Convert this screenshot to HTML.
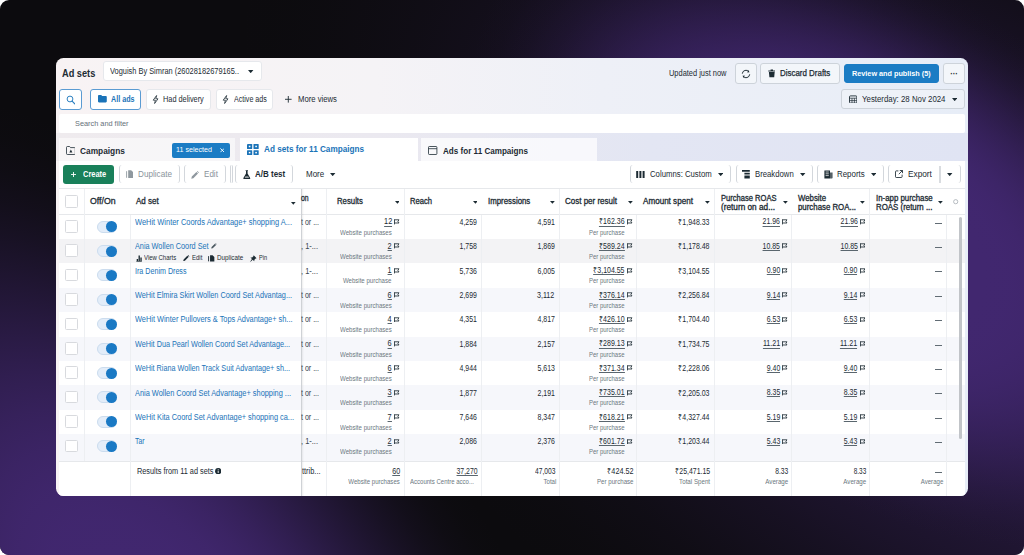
<!DOCTYPE html>
<html lang="en"><head><meta charset="utf-8"><title>Ad sets</title>
<style>
html,body{margin:0;padding:0;background:#fff;}
body{width:1024px;height:555px;overflow:hidden;font-family:"Liberation Sans", sans-serif;}
#bg{position:relative;width:1024px;height:555px;border-radius:9px;overflow:hidden;background:#0c0b0e;}
#panel{position:absolute;left:55.5px;top:58.0px;width:912.9px;height:438.3px;overflow:hidden;border-radius:7.5px;background:linear-gradient(90deg,#f8f3f4 0%,#f5f3f6 35%,#eef0f7 60%,#e7edf7 100%);}
#in{position:absolute;left:-55.5px;top:-58.0px;width:1024px;height:555px;}
.t{position:absolute;white-space:nowrap;font-family:"Liberation Sans", sans-serif;}
.r{position:absolute;box-sizing:border-box;}
</style></head><body>
<div id="bg"><div style="position:absolute;left:119.4px;top:-526.2px;width:1714px;height:1714px;transform:rotate(32.9deg);background:radial-gradient(ellipse 847px 461px at center,rgba(65,39,111,0.540) 0.0%,rgba(65,39,111,0.535) 6.2%,rgba(65,39,111,0.519) 12.5%,rgba(65,39,111,0.494) 18.8%,rgba(65,39,111,0.461) 25.0%,rgba(65,39,111,0.420) 31.2%,rgba(65,39,111,0.373) 37.5%,rgba(65,39,111,0.323) 43.8%,rgba(65,39,111,0.270) 50.0%,rgba(65,39,111,0.217) 56.2%,rgba(65,39,111,0.167) 62.5%,rgba(65,39,111,0.120) 68.8%,rgba(65,39,111,0.079) 75.0%,rgba(65,39,111,0.046) 81.2%,rgba(65,39,111,0.021) 87.5%,rgba(65,39,111,0.005) 93.8%,rgba(65,39,111,0.000) 100.0%);"></div><div style="position:absolute;left:414.5px;top:-215.0px;width:892px;height:892px;transform:rotate(33.1deg);background:radial-gradient(ellipse 436px 250px at center,rgba(65,39,111,1.000) 0.0%,rgba(65,39,111,1.000) 6.2%,rgba(65,39,111,1.000) 12.5%,rgba(65,39,111,1.000) 18.8%,rgba(65,39,111,1.000) 25.0%,rgba(65,39,111,1.000) 31.2%,rgba(65,39,111,0.993) 37.5%,rgba(65,39,111,0.947) 43.8%,rgba(65,39,111,0.862) 50.0%,rgba(65,39,111,0.745) 56.2%,rgba(65,39,111,0.606) 62.5%,rgba(65,39,111,0.458) 68.8%,rgba(65,39,111,0.314) 75.0%,rgba(65,39,111,0.186) 81.2%,rgba(65,39,111,0.086) 87.5%,rgba(65,39,111,0.022) 93.8%,rgba(65,39,111,0.000) 100.0%);"></div><div style="position:absolute;left:-500.0px;top:0.0px;width:1320px;height:1320px;transform:rotate(55deg);background:radial-gradient(ellipse 650px 350px at center,rgba(65,39,111,1.000) 0.0%,rgba(65,39,111,1.000) 6.2%,rgba(65,39,111,1.000) 12.5%,rgba(65,39,111,1.000) 18.8%,rgba(65,39,111,0.990) 25.0%,rgba(65,39,111,0.952) 31.2%,rgba(65,39,111,0.887) 37.5%,rgba(65,39,111,0.798) 43.8%,rgba(65,39,111,0.691) 50.0%,rgba(65,39,111,0.573) 56.2%,rgba(65,39,111,0.451) 62.5%,rgba(65,39,111,0.332) 68.8%,rgba(65,39,111,0.222) 75.0%,rgba(65,39,111,0.130) 81.2%,rgba(65,39,111,0.059) 87.5%,rgba(65,39,111,0.015) 93.8%,rgba(65,39,111,0.000) 100.0%);"></div><div id="panel"><div id="in">
<span id="t1" class="t" style="left:62.10px;transform-origin:0 50%;transform:scaleX(0.8738);top:66.60px;font-size:10.56px;line-height:13.2px;font-weight:700;color:#1c2b33;">Ad sets</span>
<div class="r" style="left:103.20px;top:61.30px;width:158.40px;height:19.40px;background:#fff;border:1px solid #e6e8ec;border-radius:3px;"></div>
<span id="t2" class="t" style="left:109.50px;transform-origin:0 50%;transform:scaleX(0.8884);top:66.18px;font-size:8.36px;line-height:10.45px;font-weight:400;color:#1c2b33;">Voguish By Simran (26028182679165..</span>
<svg class="r" style="left:248.20px;top:70.00px;" width="5.4" height="3.2" viewBox="0 0 5.4 3.2"><path d="M0 0H5.4 L2.7 3.2 Z" fill="#1c2b33"/></svg>
<span id="t3" class="t" style="left:669.30px;transform-origin:0 50%;transform:scaleX(0.9157);top:68.81px;font-size:8.14px;line-height:10.18px;font-weight:400;color:#1c2b33;">Updated just now</span>
<div class="r" style="left:734.80px;top:63.40px;width:22.00px;height:20.20px;background:#f3f6fa;border:1px solid #cdd3da;border-radius:3px;"></div>
<svg class="r" style="left:740.80px;top:68.60px;" width="10" height="10" viewBox="0 0 10 10"><path d="M8.7 5.3A3.7 3.7 0 0 1 2 7.2M1.3 4.7A3.7 3.7 0 0 1 8 2.8" fill="none" stroke="#1c2b33" stroke-width=".95"/><path d="M7.3 1.1L8.5 3.3 6.2 3.5ZM2.7 8.9L1.5 6.7 3.8 6.5Z" fill="#1c2b33"/></svg>
<div class="r" style="left:760.30px;top:63.40px;width:79.60px;height:20.20px;background:#f3f6fa;border:1px solid #cdd3da;border-radius:3px;"></div>
<svg class="r" style="left:767.60px;top:69.30px;" width="7.6" height="8.6" viewBox="0 0 7.6 8.6"><path d="M0.3 1.6H7.3V2.6H0.3ZM2.6 0.4H5V1.4H2.6ZM0.9 3.1H6.7L6.2 8.3H1.4Z" fill="#1c2b33"/></svg>
<span id="t4" class="t" style="left:780.20px;transform-origin:0 50%;transform:scaleX(0.9516);top:68.38px;font-size:8.36px;line-height:10.45px;font-weight:400;color:#1c2b33;-webkit-text-stroke:.25px #1c2b33;">Discard Drafts</span>
<div class="r" style="left:843.70px;top:63.90px;width:95.80px;height:18.90px;background:#1b7cc4;border:1px solid #1b7cc4;border-radius:3px;"></div>
<span id="t5" class="t" style="left:852.00px;transform-origin:0 50%;transform:scaleX(0.9585);top:69.05px;font-size:7.59px;line-height:9.49px;font-weight:700;color:#fff;">Review and publish (5)</span>
<div class="r" style="left:943.10px;top:63.40px;width:21.80px;height:20.20px;background:#f3f6fa;border:1px solid #cdd3da;border-radius:3px;"></div>
<span id="t6" class="t" style="left:954.00px;transform-origin:50% 50%;transform:translateX(-50%) scaleX(0.8800);top:68.80px;font-size:8.8px;line-height:11.0px;font-weight:700;color:#1c2b33;">···</span>
<div class="r" style="left:59.00px;top:89.30px;width:22.80px;height:20.60px;background:#fff;border:1px solid #5a9bd2;border-radius:3px;"></div>
<svg class="r" style="left:65.60px;top:95.00px;" width="9.6" height="9.6" viewBox="0 0 9.6 9.6"><circle cx="4" cy="4" r="2.9" fill="none" stroke="#2a7fc0" stroke-width="1"/><path d="M6.1 6.1L8.8 8.8" stroke="#2a7fc0" stroke-width="1.2" stroke-linecap="round"/></svg>
<div class="r" style="left:90.40px;top:89.30px;width:50.40px;height:20.60px;background:#fff;border:1px solid #5a9bd2;border-radius:3px;"></div>
<svg class="r" style="left:97.90px;top:95.40px;" width="8.8" height="7.4" viewBox="0 0 8.8 7.4"><path d="M0 1.2C0 .6.4 0 1 0H3.2L4.2 1.1H7.8C8.4 1.1 8.8 1.6 8.8 2.2V6.3C8.8 6.9 8.4 7.4 7.8 7.4H1C.4 7.4 0 6.9 0 6.3Z" fill="#1a73b8"/></svg>
<span id="t7" class="t" style="left:110.50px;transform-origin:0 50%;transform:scaleX(0.8589);top:94.08px;font-size:8.36px;line-height:10.45px;font-weight:700;color:#1a73b8;">All ads</span>
<div class="r" style="left:145.80px;top:89.30px;width:65.10px;height:20.60px;background:#fff;border:1px solid #e6e8ec;border-radius:3px;"></div>
<svg class="r" style="left:152.00px;top:94.80px;" width="7" height="9" viewBox="0 0 7 9"><path d="M4.6 .5L1.2 5.2H3.4L2.6 8.5 6 3.8H3.8Z" fill="none" stroke="#1c2b33" stroke-width=".8" stroke-linejoin="round"/></svg>
<span id="t8" class="t" style="left:163.00px;transform-origin:0 50%;transform:scaleX(0.8795);top:94.08px;font-size:8.36px;line-height:10.45px;font-weight:400;color:#1c2b33;">Had delivery</span>
<div class="r" style="left:216.00px;top:89.30px;width:57.20px;height:20.60px;background:#fff;border:1px solid #e6e8ec;border-radius:3px;"></div>
<svg class="r" style="left:222.30px;top:94.80px;" width="7" height="9" viewBox="0 0 7 9"><path d="M4.6 .5L1.2 5.2H3.4L2.6 8.5 6 3.8H3.8Z" fill="none" stroke="#1c2b33" stroke-width=".8" stroke-linejoin="round"/></svg>
<span id="t9" class="t" style="left:233.60px;transform-origin:0 50%;transform:scaleX(0.8519);top:94.08px;font-size:8.36px;line-height:10.45px;font-weight:400;color:#1c2b33;">Active ads</span>
<svg class="r" style="left:285.00px;top:96.20px;" width="6.6" height="6.6" viewBox="0 0 6.6 6.6"><path d="M3.3 0V6.6M0 3.3H6.6" stroke="#1c2b33" stroke-width=".9"/></svg>
<span id="t10" class="t" style="left:298.00px;transform-origin:0 50%;transform:scaleX(0.9217);top:94.08px;font-size:8.36px;line-height:10.45px;font-weight:400;color:#1c2b33;">More views</span>
<div class="r" style="left:841.40px;top:89.10px;width:123.80px;height:19.80px;background:#eef2f8;border:1px solid #cdd3da;border-radius:3px;"></div>
<svg class="r" style="left:848.70px;top:94.60px;" width="8.4" height="8.6" viewBox="0 0 8.4 8.6"><rect x=".5" y=".9" width="7.4" height="7.2" rx="1" fill="none" stroke="#1c2b33" stroke-width=".9"/><path d="M.5 3.2H7.9M.5 5.6H7.9M3 3.2V8M5.4 3.2V8" stroke="#1c2b33" stroke-width=".7"/></svg>
<span id="t11" class="t" style="left:861.80px;transform-origin:0 50%;transform:scaleX(0.9268);top:93.61px;font-size:8.47px;line-height:10.59px;font-weight:400;color:#1c2b33;">Yesterday: 28 Nov 2024</span>
<svg class="r" style="left:951.70px;top:97.60px;" width="5.4" height="3.2" viewBox="0 0 5.4 3.2"><path d="M0 0H5.4 L2.7 3.2 Z" fill="#1c2b33"/></svg>
<div class="r" style="left:59.00px;top:114.30px;width:906.20px;height:18.90px;background:#fff;border-radius:2px;"></div>
<span id="t12" class="t" style="left:74.70px;transform-origin:0 50%;transform:scaleX(0.9292);top:118.55px;font-size:7.92px;line-height:9.9px;font-weight:400;color:#66717a;">Search and filter</span>
<div class="r" style="left:55.00px;top:133.20px;width:915.00px;height:27.80px;background:linear-gradient(90deg,#efebee 0%,#ebe9f0 35%,#e3e6f3 65%,#e0e4f3 100%);"></div>
<div class="r" style="left:59.00px;top:137.80px;width:176.40px;height:23.20px;background:rgba(255,255,255,.55);"></div>
<div class="r" style="left:240.40px;top:137.80px;width:177.20px;height:23.20px;background:#fff;"></div>
<div class="r" style="left:421.30px;top:137.80px;width:176.10px;height:23.20px;background:rgba(255,255,255,.72);"></div>
<svg class="r" style="left:65.60px;top:146.40px;" width="9.8" height="9" viewBox="0 0 9.8 9"><path d="M.5 1.3C.5.9.8.5 1.3.5H3.6L4.5 1.6H8.5C9 1.6 9.3 2 9.3 2.4V7.7C9.3 8.1 9 8.5 8.5 8.5H1.3C.8 8.5.5 8.1.5 7.7Z" fill="none" stroke="#1c2b33" stroke-width=".8"/><path d="M4.9 3.4L6.4 6.6H3.4Z" fill="#1c2b33"/></svg>
<span id="t13" class="t" style="left:80.30px;transform-origin:0 50%;transform:scaleX(0.8913);top:145.56px;font-size:9.35px;line-height:11.69px;font-weight:700;color:#1c2b33;">Campaigns</span>
<div class="r" style="left:171.60px;top:143.30px;width:58.00px;height:14.40px;background:#1b7cc4;border-radius:2px;"></div>
<span id="t14" class="t" style="left:176.00px;transform-origin:0 50%;transform:scaleX(0.8910);top:145.38px;font-size:8.03px;line-height:10.04px;font-weight:400;color:#fff;">11 selected</span>
<svg class="r" style="left:219.60px;top:148.20px;" width="4.6" height="4.6" viewBox="0 0 4.6 4.6"><path d="M.4.4L4.2 4.2M4.2.4L.4 4.2" stroke="#fff" stroke-width=".9"/></svg>
<svg class="r" style="left:247.00px;top:143.80px;" width="11.8" height="11.2" viewBox="0 0 11.8 11.2"><g fill="#1a73b8"><rect x="0" y="0" width="5.2" height="4.9" rx=".5"/><rect x="6.5" y="0" width="5.2" height="4.9" rx=".5"/><rect x="0" y="6.2" width="5.2" height="4.9" rx=".5"/><rect x="6.5" y="6.2" width="5.2" height="4.9" rx=".5"/></g><g fill="#fff"><rect x="1.8" y="1.7" width="1.6" height="1.5"/><rect x="8.3" y="1.7" width="1.6" height="1.5"/><rect x="1.8" y="7.9" width="1.6" height="1.5"/><rect x="8.3" y="7.9" width="1.6" height="1.5"/></g></svg>
<span id="t15" class="t" style="left:263.90px;transform-origin:0 50%;transform:scaleX(0.8761);top:143.66px;font-size:9.35px;line-height:11.69px;font-weight:700;color:#1a73b8;">Ad sets for 11 Campaigns</span>
<svg class="r" style="left:428.40px;top:146.40px;" width="9.4" height="9" viewBox="0 0 9.4 9"><rect x=".5" y=".5" width="8.4" height="8" rx=".8" fill="none" stroke="#1c2b33" stroke-width=".8"/><path d="M.5 2.7H8.9" stroke="#1c2b33" stroke-width=".8"/></svg>
<span id="t16" class="t" style="left:443.00px;transform-origin:0 50%;transform:scaleX(0.8661);top:145.96px;font-size:9.35px;line-height:11.69px;font-weight:700;color:#1c2b33;">Ads for 11 Campaigns</span>
<div class="r" style="left:59.00px;top:161.00px;width:905.70px;height:28.00px;background:#fff;"></div>
<div class="r" style="left:63.10px;top:164.80px;width:50.90px;height:18.90px;background:#19805a;border-radius:3px;"></div>
<svg class="r" style="left:70.90px;top:172.20px;" width="5" height="5" viewBox="0 0 5 5"><path d="M2.5 0V5M0 2.5H5" stroke="#fff" stroke-width=".9"/></svg>
<span id="t17" class="t" style="left:82.80px;transform-origin:0 50%;transform:scaleX(0.8928);top:169.18px;font-size:8.36px;line-height:10.45px;font-weight:700;color:#fff;">Create</span>
<div class="r" style="left:118.60px;top:165.30px;width:61.40px;height:18.20px;background:transparent;border-left:1px solid #d3d7dc;border-right:1px solid #d3d7dc;border-radius:3px;"></div>
<svg class="r" style="left:125.70px;top:170.40px;" width="7.6" height="8.4" viewBox="0 0 7.6 8.4"><path d="M.6 1.2V7.8" stroke="#8f989f" stroke-width=".9"/><path d="M2.2.3H5.2L7.2 2.3V7.9H2.2Z" fill="#8f989f"/></svg>
<span id="t18" class="t" style="left:137.80px;transform-origin:0 50%;transform:scaleX(0.9771);top:169.18px;font-size:8.36px;line-height:10.45px;font-weight:400;color:#8a939b;">Duplicate</span>
<div class="r" style="left:183.70px;top:165.30px;width:42.30px;height:18.20px;background:transparent;border-left:1px solid #d3d7dc;border-right:1px solid #d3d7dc;border-radius:3px;"></div>
<svg class="r" style="left:191.00px;top:170.60px;" width="8" height="8" viewBox="0 0 8 8"><path d="M.3 7.7L.8 5.6 5.4 1 7 2.6 2.4 7.2Z M5.9.5L6.4 0 8 1.6 7.5 2.1Z" fill="#8f989f"/></svg>
<span id="t19" class="t" style="left:203.80px;transform-origin:0 50%;transform:scaleX(0.9659);top:169.18px;font-size:8.36px;line-height:10.45px;font-weight:400;color:#8a939b;">Edit</span>
<div class="r" style="left:229.50px;top:165.30px;width:3.00px;height:18.20px;background:transparent;border-left:1px solid #d3d7dc;border-right:1px solid #d3d7dc;border-radius:3px;"></div>
<div class="r" style="left:235.40px;top:165.30px;width:58.00px;height:18.20px;background:transparent;border-left:1px solid #d3d7dc;border-right:1px solid #d3d7dc;border-radius:3px;"></div>
<svg class="r" style="left:243.00px;top:169.80px;" width="7.6" height="9.4" viewBox="0 0 7.6 9.4"><path d="M2.6.3H5V1.1H4.6V3.6L7.2 8.1C7.4 8.6 7.1 9.1 6.6 9.1H1C.5 9.1.2 8.6.4 8.1L3 3.6V1.1H2.6Z" fill="#1c2b33"/><path d="M2.4 6.3H5.2L6 7.9H1.6Z" fill="#fff" opacity=".55"/></svg>
<span id="t20" class="t" style="left:254.80px;transform-origin:0 50%;transform:scaleX(0.9315);top:169.04px;font-size:8.58px;line-height:10.72px;font-weight:700;color:#1c2b33;">A/B test</span>
<span id="t21" class="t" style="left:306.00px;transform-origin:0 50%;transform:scaleX(0.9311);top:169.04px;font-size:8.58px;line-height:10.72px;font-weight:400;color:#1c2b33;">More</span>
<svg class="r" style="left:330.20px;top:173.20px;" width="5.4" height="3.2" viewBox="0 0 5.4 3.2"><path d="M0 0H5.4 L2.7 3.2 Z" fill="#1c2b33"/></svg>
<div class="r" style="left:629.70px;top:165.30px;width:100.90px;height:18.20px;background:transparent;border-left:1px solid #d3d7dc;border-right:1px solid #d3d7dc;border-radius:3px;"></div>
<svg class="r" style="left:636.00px;top:170.60px;" width="8.8" height="7.6" viewBox="0 0 8.8 7.6"><path d="M.2 0H2.2V7.6H.2ZM3.4 0H5.4V7.6H3.4ZM6.6 0H8.6V7.6H6.6Z" fill="#1c2b33"/></svg>
<span id="t22" class="t" style="left:649.90px;transform-origin:0 50%;transform:scaleX(0.9304);top:169.18px;font-size:8.36px;line-height:10.45px;font-weight:400;color:#1c2b33;">Columns: Custom</span>
<svg class="r" style="left:717.50px;top:173.20px;" width="5.4" height="3.2" viewBox="0 0 5.4 3.2"><path d="M0 0H5.4 L2.7 3.2 Z" fill="#1c2b33"/></svg>
<div class="r" style="left:735.60px;top:165.30px;width:77.30px;height:18.20px;background:transparent;border-left:1px solid #d3d7dc;border-right:1px solid #d3d7dc;border-radius:3px;"></div>
<svg class="r" style="left:742.40px;top:170.20px;" width="7.8" height="8.6" viewBox="0 0 7.8 8.6"><path d="M0 0H7.8V1.8H0ZM2.4 2.8H7.8V4.6H2.4ZM2.4 5.6H7.8V8.6H2.4Z" fill="#1c2b33"/></svg>
<span id="t23" class="t" style="left:755.00px;transform-origin:0 50%;transform:scaleX(0.9269);top:169.18px;font-size:8.36px;line-height:10.45px;font-weight:400;color:#1c2b33;">Breakdown</span>
<svg class="r" style="left:800.30px;top:173.20px;" width="5.4" height="3.2" viewBox="0 0 5.4 3.2"><path d="M0 0H5.4 L2.7 3.2 Z" fill="#1c2b33"/></svg>
<div class="r" style="left:817.20px;top:165.30px;width:66.80px;height:18.20px;background:transparent;border-left:1px solid #d3d7dc;border-right:1px solid #d3d7dc;border-radius:3px;"></div>
<svg class="r" style="left:823.50px;top:170.00px;" width="9" height="9" viewBox="0 0 9 9"><path d="M.4.4H6V8.6H.4Z" fill="#1c2b33"/><path d="M6 2.4H8.6V7.6C8.6 8.2 8.2 8.6 7.6 8.6H6Z" fill="#1c2b33" opacity=".75"/><path d="M1.6 2H4.8M1.6 3.8H4.8M1.6 5.6H4.8" stroke="#fff" stroke-width=".7"/></svg>
<span id="t24" class="t" style="left:836.90px;transform-origin:0 50%;transform:scaleX(0.9480);top:169.18px;font-size:8.36px;line-height:10.45px;font-weight:400;color:#1c2b33;">Reports</span>
<svg class="r" style="left:870.90px;top:173.20px;" width="5.4" height="3.2" viewBox="0 0 5.4 3.2"><path d="M0 0H5.4 L2.7 3.2 Z" fill="#1c2b33"/></svg>
<div class="r" style="left:887.80px;top:165.30px;width:73.20px;height:18.20px;background:transparent;border-left:1px solid #d3d7dc;border-right:1px solid #d3d7dc;border-radius:3px;"></div>
<svg class="r" style="left:894.90px;top:170.40px;" width="8" height="8" viewBox="0 0 8 8"><path d="M3.4.9H1.2C.8.9.5 1.2.5 1.6V6.8C.5 7.2.8 7.5 1.2 7.5H6.4C6.8 7.5 7.1 7.2 7.1 6.8V4.6" fill="none" stroke="#1c2b33" stroke-width=".85"/><path d="M4.8.5H7.5V3.2M7.5.5L3.8 4.2" fill="none" stroke="#1c2b33" stroke-width=".85"/></svg>
<span id="t25" class="t" style="left:907.50px;transform-origin:0 50%;transform:scaleX(0.9907);top:169.18px;font-size:8.36px;line-height:10.45px;font-weight:400;color:#1c2b33;">Export</span>
<div class="r" style="left:938.60px;top:166.00px;width:2.00px;height:17.00px;background:#d9dce0;"></div>
<svg class="r" style="left:947.30px;top:173.20px;" width="5.4" height="3.2" viewBox="0 0 5.4 3.2"><path d="M0 0H5.4 L2.7 3.2 Z" fill="#1c2b33"/></svg>
<div class="r" style="left:59.00px;top:188.80px;width:905.70px;height:309.50px;background:#fff;"></div>
<div class="r" style="left:59.00px;top:238.90px;width:905.70px;height:24.40px;background:#f3f3f5;"></div>
<div class="r" style="left:59.00px;top:287.70px;width:905.70px;height:24.40px;background:#f6f7fb;"></div>
<div class="r" style="left:59.00px;top:336.50px;width:905.70px;height:24.40px;background:#f6f7fb;"></div>
<div class="r" style="left:59.00px;top:385.30px;width:905.70px;height:24.40px;background:#f6f7fb;"></div>
<div class="r" style="left:59.00px;top:434.10px;width:905.70px;height:27.40px;background:#f6f7fb;"></div>
<div class="r" style="left:59.00px;top:188.30px;width:905.70px;height:1.00px;background:#e6e8eb;"></div>
<div class="r" style="left:59.00px;top:214.00px;width:905.70px;height:1.00px;background:#e6e8eb;"></div>
<div class="r" style="left:59.00px;top:461.00px;width:905.70px;height:1.00px;background:#e6e8eb;"></div>
<div class="r" style="left:83.50px;top:188.80px;width:1.00px;height:272.70px;background:#edeff2;"></div>
<div class="r" style="left:130.20px;top:214.50px;width:1.00px;height:281.80px;background:#edeff2;"></div>
<div class="r" style="left:326.30px;top:188.80px;width:1.00px;height:307.50px;background:#edeff2;"></div>
<div class="r" style="left:403.90px;top:188.80px;width:1.00px;height:307.50px;background:#edeff2;"></div>
<div class="r" style="left:480.90px;top:214.50px;width:1.00px;height:281.80px;background:#edeff2;"></div>
<div class="r" style="left:558.50px;top:188.80px;width:1.00px;height:307.50px;background:#edeff2;"></div>
<div class="r" style="left:636.00px;top:214.50px;width:1.00px;height:281.80px;background:#edeff2;"></div>
<div class="r" style="left:714.20px;top:188.80px;width:1.00px;height:307.50px;background:#edeff2;"></div>
<div class="r" style="left:791.10px;top:214.50px;width:1.00px;height:281.80px;background:#edeff2;"></div>
<div class="r" style="left:869.10px;top:188.80px;width:1.00px;height:307.50px;background:#edeff2;"></div>
<div class="r" style="left:946.10px;top:214.50px;width:1.00px;height:281.80px;background:#edeff2;"></div>
<div class="r" style="left:301.40px;top:188.80px;width:3.00px;height:307.50px;background:linear-gradient(90deg,rgba(0,0,0,.10),rgba(0,0,0,0));"></div>
<div class="r" style="left:300.90px;top:188.80px;width:0.80px;height:307.50px;background:#cfd2d6;"></div>
<div class="r" style="left:65.20px;top:195.25px;width:12.70px;height:12.70px;background:#fff;border:1px solid #d8dade;border-radius:1.5px;"></div>
<span id="t26" class="t" style="left:90.40px;transform-origin:0 50%;transform:scaleX(1.0189);top:196.04px;font-size:8.58px;line-height:10.72px;font-weight:400;color:#1c2b33;-webkit-text-stroke:.3px #1c2b33;">Off/On</span>
<span id="t27" class="t" style="left:135.70px;transform-origin:0 50%;transform:scaleX(0.9331);top:196.04px;font-size:8.58px;line-height:10.72px;font-weight:400;color:#1c2b33;-webkit-text-stroke:.3px #1c2b33;">Ad set</span>
<svg class="r" style="left:291.20px;top:202.20px;" width="4.6" height="2.8" viewBox="0 0 4.6 2.8"><path d="M0 0H4.6 L2.3 2.8 Z" fill="#1c2b33"/></svg>
<span id="t28" class="t" style="left:301.00px;transform-origin:0 50%;transform:scaleX(0.8189);top:192.78px;font-size:8.36px;line-height:10.45px;font-weight:400;color:#1c2b33;-webkit-text-stroke:.3px #1c2b33;">on</span>
<span id="t29" class="t" style="left:336.90px;transform-origin:0 50%;transform:scaleX(0.9307);top:196.18px;font-size:8.36px;line-height:10.45px;font-weight:400;color:#1c2b33;-webkit-text-stroke:.3px #1c2b33;">Results</span>
<svg class="r" style="left:394.70px;top:201.10px;" width="4.8" height="2.8" viewBox="0 0 4.8 2.8"><path d="M0 0H4.8 L2.4 2.8 Z" fill="#1c2b33"/></svg>
<span id="t30" class="t" style="left:410.20px;transform-origin:0 50%;transform:scaleX(0.9119);top:196.18px;font-size:8.36px;line-height:10.45px;font-weight:400;color:#1c2b33;-webkit-text-stroke:.3px #1c2b33;">Reach</span>
<svg class="r" style="left:472.60px;top:201.10px;" width="4.8" height="2.8" viewBox="0 0 4.8 2.8"><path d="M0 0H4.8 L2.4 2.8 Z" fill="#1c2b33"/></svg>
<span id="t31" class="t" style="left:487.70px;transform-origin:0 50%;transform:scaleX(0.9403);top:196.18px;font-size:8.36px;line-height:10.45px;font-weight:400;color:#1c2b33;-webkit-text-stroke:.3px #1c2b33;">Impressions</span>
<svg class="r" style="left:550.10px;top:201.10px;" width="4.8" height="2.8" viewBox="0 0 4.8 2.8"><path d="M0 0H4.8 L2.4 2.8 Z" fill="#1c2b33"/></svg>
<span id="t32" class="t" style="left:565.00px;transform-origin:0 50%;transform:scaleX(0.9582);top:196.18px;font-size:8.36px;line-height:10.45px;font-weight:400;color:#1c2b33;-webkit-text-stroke:.3px #1c2b33;">Cost per result</span>
<svg class="r" style="left:627.80px;top:201.10px;" width="4.8" height="2.8" viewBox="0 0 4.8 2.8"><path d="M0 0H4.8 L2.4 2.8 Z" fill="#1c2b33"/></svg>
<span id="t33" class="t" style="left:642.80px;transform-origin:0 50%;transform:scaleX(0.9692);top:196.18px;font-size:8.36px;line-height:10.45px;font-weight:400;color:#1c2b33;-webkit-text-stroke:.3px #1c2b33;">Amount spent</span>
<svg class="r" style="left:705.10px;top:201.10px;" width="4.8" height="2.8" viewBox="0 0 4.8 2.8"><path d="M0 0H4.8 L2.4 2.8 Z" fill="#1c2b33"/></svg>
<span id="t34" class="t" style="left:720.50px;transform-origin:0 50%;transform:scaleX(0.9311);top:193.51px;font-size:8.14px;line-height:10.18px;font-weight:400;color:#1c2b33;-webkit-text-stroke:.3px #1c2b33;">Purchase ROAS</span>
<span id="t35" class="t" style="left:720.50px;transform-origin:0 50%;transform:scaleX(1.0132);top:203.11px;font-size:8.14px;line-height:10.18px;font-weight:400;color:#1c2b33;-webkit-text-stroke:.3px #1c2b33;">(return on ad...</span>
<svg class="r" style="left:782.90px;top:201.00px;" width="4.8" height="2.8" viewBox="0 0 4.8 2.8"><path d="M0 0H4.8 L2.4 2.8 Z" fill="#1c2b33"/></svg>
<span id="t36" class="t" style="left:797.80px;transform-origin:0 50%;transform:scaleX(0.9588);top:193.51px;font-size:8.14px;line-height:10.18px;font-weight:400;color:#1c2b33;-webkit-text-stroke:.3px #1c2b33;">Website</span>
<span id="t37" class="t" style="left:797.80px;transform-origin:0 50%;transform:scaleX(0.9657);top:203.11px;font-size:8.14px;line-height:10.18px;font-weight:400;color:#1c2b33;-webkit-text-stroke:.3px #1c2b33;">purchase ROA...</span>
<svg class="r" style="left:860.10px;top:201.00px;" width="4.8" height="2.8" viewBox="0 0 4.8 2.8"><path d="M0 0H4.8 L2.4 2.8 Z" fill="#1c2b33"/></svg>
<span id="t38" class="t" style="left:875.70px;transform-origin:0 50%;transform:scaleX(0.9654);top:193.51px;font-size:8.14px;line-height:10.18px;font-weight:400;color:#1c2b33;-webkit-text-stroke:.3px #1c2b33;">In-app purchase</span>
<span id="t39" class="t" style="left:875.70px;transform-origin:0 50%;transform:scaleX(0.9700);top:203.11px;font-size:8.14px;line-height:10.18px;font-weight:400;color:#1c2b33;-webkit-text-stroke:.3px #1c2b33;">ROAS (return ...</span>
<svg class="r" style="left:938.30px;top:201.00px;" width="4.8" height="2.8" viewBox="0 0 4.8 2.8"><path d="M0 0H4.8 L2.4 2.8 Z" fill="#1c2b33"/></svg>
<svg class="r" style="left:953.20px;top:199.40px;" width="5.4" height="5.4" viewBox="0 0 5.4 5.4"><circle cx="2.7" cy="2.7" r="2.1" fill="none" stroke="#9aa1a8" stroke-width=".7"/></svg>
<div class="r" style="left:65.20px;top:219.95px;width:12.70px;height:12.70px;background:#fff;border:1px solid #d8dade;border-radius:1.5px;"></div>
<div class="r" style="left:97.00px;top:220.60px;width:20.30px;height:12.00px;background:#e3edf9;border-radius:6px;border:.7px solid #cbdcee;"></div>
<div class="r" style="left:106.00px;top:221.10px;width:11.00px;height:11.00px;background:#1a79c4;border-radius:50%;"></div>
<span id="t40" class="t" style="left:135.00px;transform-origin:0 50%;transform:scaleX(0.8951);top:216.78px;font-size:8.36px;line-height:10.45px;font-weight:400;color:#1a73b8;">WeHit Winter Coords Advantage+ shopping A...</span>
<span id="t41" class="t" style="left:300.60px;transform-origin:0 50%;transform:scaleX(0.8440);top:216.78px;font-size:8.36px;line-height:10.45px;font-weight:400;color:#3a4750;">t or ...</span>
<span id="t42" class="t" style="right:632.20px;transform-origin:100% 50%;transform:scaleX(0.8800);top:218.35px;font-size:8.36px;line-height:7.3px;font-weight:400;color:#1c2b33;border-bottom:.7px solid #5a666e;">12</span>
<svg class="r" style="left:394.00px;top:219.00px;" width="5.6" height="5.8" viewBox="0 0 5.6 5.8"><path d="M.5.3V5.4M.5.8H5L3.9 2.4 5 4H.5" fill="none" stroke="#2b3940" stroke-width=".9"/></svg>
<span id="t43" class="t" style="right:632.20px;transform-origin:100% 50%;transform:scaleX(0.8960);top:228.64px;font-size:6.82px;line-height:8.53px;font-weight:400;color:#6b7780;">Website purchases</span>
<span id="t44" class="t" style="right:547.00px;transform-origin:100% 50%;transform:scaleX(0.8300);top:216.78px;font-size:8.36px;line-height:10.45px;font-weight:400;color:#1c2b33;">4,259</span>
<span id="t45" class="t" style="right:469.50px;transform-origin:100% 50%;transform:scaleX(0.8300);top:216.78px;font-size:8.36px;line-height:10.45px;font-weight:400;color:#1c2b33;">4,591</span>
<span id="t46" class="t" style="right:399.40px;transform-origin:100% 50%;transform:scaleX(0.8385);top:218.35px;font-size:8.36px;line-height:7.3px;font-weight:400;color:#1c2b33;border-bottom:.7px solid #5a666e;">₹162.36</span>
<svg class="r" style="left:627.00px;top:219.00px;" width="5.6" height="5.8" viewBox="0 0 5.6 5.8"><path d="M.5.3V5.4M.5.8H5L3.9 2.4 5 4H.5" fill="none" stroke="#2b3940" stroke-width=".9"/></svg>
<span id="t47" class="t" style="right:399.40px;transform-origin:100% 50%;transform:scaleX(0.8783);top:228.64px;font-size:6.82px;line-height:8.53px;font-weight:400;color:#6b7780;">Per purchase</span>
<span id="t48" class="t" style="right:314.40px;transform-origin:100% 50%;transform:scaleX(0.8366);top:216.78px;font-size:8.36px;line-height:10.45px;font-weight:400;color:#1c2b33;">₹1,948.33</span>
<span id="t49" class="t" style="right:243.80px;transform-origin:100% 50%;transform:scaleX(0.8300);top:218.35px;font-size:8.36px;line-height:7.3px;font-weight:400;color:#1c2b33;border-bottom:.7px solid #5a666e;">21.96</span>
<svg class="r" style="left:782.40px;top:219.00px;" width="5.6" height="5.8" viewBox="0 0 5.6 5.8"><path d="M.5.3V5.4M.5.8H5L3.9 2.4 5 4H.5" fill="none" stroke="#2b3940" stroke-width=".9"/></svg>
<span id="t50" class="t" style="right:166.50px;transform-origin:100% 50%;transform:scaleX(0.8300);top:218.35px;font-size:8.36px;line-height:7.3px;font-weight:400;color:#1c2b33;border-bottom:.7px solid #5a666e;">21.96</span>
<svg class="r" style="left:859.70px;top:219.00px;" width="5.6" height="5.8" viewBox="0 0 5.6 5.8"><path d="M.5.3V5.4M.5.8H5L3.9 2.4 5 4H.5" fill="none" stroke="#2b3940" stroke-width=".9"/></svg>
<div class="r" style="left:935.00px;top:222.50px;width:7.30px;height:0.70px;background:#616c74;"></div>
<span id="t51" class="t" style="left:938.70px;transform-origin:50% 50%;transform:translateX(-50%) scaleX(0.8800);top:221.31px;font-size:1.1px;line-height:1.38px;font-weight:400;color:rgba(0,0,0,0);">—</span>
<div class="r" style="left:65.20px;top:244.35px;width:12.70px;height:12.70px;background:#fff;border:1px solid #d8dade;border-radius:1.5px;"></div>
<div class="r" style="left:97.00px;top:245.00px;width:20.30px;height:12.00px;background:#e3edf9;border-radius:6px;border:.7px solid #cbdcee;"></div>
<div class="r" style="left:106.00px;top:245.50px;width:11.00px;height:11.00px;background:#1a79c4;border-radius:50%;"></div>
<span id="t52" class="t" style="left:135.00px;transform-origin:0 50%;transform:scaleX(0.8734);top:241.18px;font-size:8.36px;line-height:10.45px;font-weight:400;color:#1a73b8;">Ania Wollen Coord Set</span>
<span id="t53" class="t" style="left:300.60px;transform-origin:0 50%;transform:scaleX(0.8940);top:241.18px;font-size:8.36px;line-height:10.45px;font-weight:400;color:#3a4750;">, 1-...</span>
<span id="t54" class="t" style="right:632.20px;transform-origin:100% 50%;transform:scaleX(0.8800);top:242.75px;font-size:8.36px;line-height:7.3px;font-weight:400;color:#1c2b33;border-bottom:.7px solid #5a666e;">2</span>
<svg class="r" style="left:394.00px;top:243.40px;" width="5.6" height="5.8" viewBox="0 0 5.6 5.8"><path d="M.5.3V5.4M.5.8H5L3.9 2.4 5 4H.5" fill="none" stroke="#2b3940" stroke-width=".9"/></svg>
<span id="t55" class="t" style="right:632.20px;transform-origin:100% 50%;transform:scaleX(0.8960);top:253.04px;font-size:6.82px;line-height:8.53px;font-weight:400;color:#6b7780;">Website purchases</span>
<span id="t56" class="t" style="right:547.00px;transform-origin:100% 50%;transform:scaleX(0.8300);top:241.18px;font-size:8.36px;line-height:10.45px;font-weight:400;color:#1c2b33;">1,758</span>
<span id="t57" class="t" style="right:469.50px;transform-origin:100% 50%;transform:scaleX(0.8300);top:241.18px;font-size:8.36px;line-height:10.45px;font-weight:400;color:#1c2b33;">1,869</span>
<span id="t58" class="t" style="right:399.40px;transform-origin:100% 50%;transform:scaleX(0.8385);top:242.75px;font-size:8.36px;line-height:7.3px;font-weight:400;color:#1c2b33;border-bottom:.7px solid #5a666e;">₹589.24</span>
<svg class="r" style="left:627.00px;top:243.40px;" width="5.6" height="5.8" viewBox="0 0 5.6 5.8"><path d="M.5.3V5.4M.5.8H5L3.9 2.4 5 4H.5" fill="none" stroke="#2b3940" stroke-width=".9"/></svg>
<span id="t59" class="t" style="right:399.40px;transform-origin:100% 50%;transform:scaleX(0.8783);top:253.04px;font-size:6.82px;line-height:8.53px;font-weight:400;color:#6b7780;">Per purchase</span>
<span id="t60" class="t" style="right:314.40px;transform-origin:100% 50%;transform:scaleX(0.8366);top:241.18px;font-size:8.36px;line-height:10.45px;font-weight:400;color:#1c2b33;">₹1,178.48</span>
<span id="t61" class="t" style="right:243.80px;transform-origin:100% 50%;transform:scaleX(0.8300);top:242.75px;font-size:8.36px;line-height:7.3px;font-weight:400;color:#1c2b33;border-bottom:.7px solid #5a666e;">10.85</span>
<svg class="r" style="left:782.40px;top:243.40px;" width="5.6" height="5.8" viewBox="0 0 5.6 5.8"><path d="M.5.3V5.4M.5.8H5L3.9 2.4 5 4H.5" fill="none" stroke="#2b3940" stroke-width=".9"/></svg>
<span id="t62" class="t" style="right:166.50px;transform-origin:100% 50%;transform:scaleX(0.8300);top:242.75px;font-size:8.36px;line-height:7.3px;font-weight:400;color:#1c2b33;border-bottom:.7px solid #5a666e;">10.85</span>
<svg class="r" style="left:859.70px;top:243.40px;" width="5.6" height="5.8" viewBox="0 0 5.6 5.8"><path d="M.5.3V5.4M.5.8H5L3.9 2.4 5 4H.5" fill="none" stroke="#2b3940" stroke-width=".9"/></svg>
<div class="r" style="left:935.00px;top:246.90px;width:7.30px;height:0.70px;background:#616c74;"></div>
<span id="t63" class="t" style="left:938.70px;transform-origin:50% 50%;transform:translateX(-50%) scaleX(0.8800);top:245.71px;font-size:1.1px;line-height:1.38px;font-weight:400;color:rgba(0,0,0,0);">—</span>
<div class="r" style="left:65.20px;top:268.75px;width:12.70px;height:12.70px;background:#fff;border:1px solid #d8dade;border-radius:1.5px;"></div>
<div class="r" style="left:97.00px;top:269.40px;width:20.30px;height:12.00px;background:#e3edf9;border-radius:6px;border:.7px solid #cbdcee;"></div>
<div class="r" style="left:106.00px;top:269.90px;width:11.00px;height:11.00px;background:#1a79c4;border-radius:50%;"></div>
<span id="t64" class="t" style="left:135.00px;transform-origin:0 50%;transform:scaleX(0.8543);top:265.57px;font-size:8.36px;line-height:10.45px;font-weight:400;color:#1a73b8;">Ira Denim Dress</span>
<span id="t65" class="t" style="left:300.60px;transform-origin:0 50%;transform:scaleX(0.8940);top:265.57px;font-size:8.36px;line-height:10.45px;font-weight:400;color:#3a4750;">, 1-...</span>
<span id="t66" class="t" style="right:632.20px;transform-origin:100% 50%;transform:scaleX(0.8800);top:267.15px;font-size:8.36px;line-height:7.3px;font-weight:400;color:#1c2b33;border-bottom:.7px solid #5a666e;">1</span>
<svg class="r" style="left:394.00px;top:267.80px;" width="5.6" height="5.8" viewBox="0 0 5.6 5.8"><path d="M.5.3V5.4M.5.8H5L3.9 2.4 5 4H.5" fill="none" stroke="#2b3940" stroke-width=".9"/></svg>
<span id="t67" class="t" style="right:632.20px;transform-origin:100% 50%;transform:scaleX(0.8914);top:277.44px;font-size:6.82px;line-height:8.53px;font-weight:400;color:#6b7780;">Website purchase</span>
<span id="t68" class="t" style="right:547.00px;transform-origin:100% 50%;transform:scaleX(0.8300);top:265.57px;font-size:8.36px;line-height:10.45px;font-weight:400;color:#1c2b33;">5,736</span>
<span id="t69" class="t" style="right:469.50px;transform-origin:100% 50%;transform:scaleX(0.8300);top:265.57px;font-size:8.36px;line-height:10.45px;font-weight:400;color:#1c2b33;">6,005</span>
<span id="t70" class="t" style="right:399.40px;transform-origin:100% 50%;transform:scaleX(0.8366);top:267.15px;font-size:8.36px;line-height:7.3px;font-weight:400;color:#1c2b33;border-bottom:.7px solid #5a666e;">₹3,104.55</span>
<svg class="r" style="left:627.00px;top:267.80px;" width="5.6" height="5.8" viewBox="0 0 5.6 5.8"><path d="M.5.3V5.4M.5.8H5L3.9 2.4 5 4H.5" fill="none" stroke="#2b3940" stroke-width=".9"/></svg>
<span id="t71" class="t" style="right:399.40px;transform-origin:100% 50%;transform:scaleX(0.8783);top:277.44px;font-size:6.82px;line-height:8.53px;font-weight:400;color:#6b7780;">Per purchase</span>
<span id="t72" class="t" style="right:314.40px;transform-origin:100% 50%;transform:scaleX(0.8366);top:265.57px;font-size:8.36px;line-height:10.45px;font-weight:400;color:#1c2b33;">₹3,104.55</span>
<span id="t73" class="t" style="right:243.80px;transform-origin:100% 50%;transform:scaleX(0.8295);top:267.15px;font-size:8.36px;line-height:7.3px;font-weight:400;color:#1c2b33;border-bottom:.7px solid #5a666e;">0.90</span>
<svg class="r" style="left:782.40px;top:267.80px;" width="5.6" height="5.8" viewBox="0 0 5.6 5.8"><path d="M.5.3V5.4M.5.8H5L3.9 2.4 5 4H.5" fill="none" stroke="#2b3940" stroke-width=".9"/></svg>
<span id="t74" class="t" style="right:166.50px;transform-origin:100% 50%;transform:scaleX(0.8295);top:267.15px;font-size:8.36px;line-height:7.3px;font-weight:400;color:#1c2b33;border-bottom:.7px solid #5a666e;">0.90</span>
<svg class="r" style="left:859.70px;top:267.80px;" width="5.6" height="5.8" viewBox="0 0 5.6 5.8"><path d="M.5.3V5.4M.5.8H5L3.9 2.4 5 4H.5" fill="none" stroke="#2b3940" stroke-width=".9"/></svg>
<div class="r" style="left:935.00px;top:271.30px;width:7.30px;height:0.70px;background:#616c74;"></div>
<span id="t75" class="t" style="left:938.70px;transform-origin:50% 50%;transform:translateX(-50%) scaleX(0.8800);top:270.11px;font-size:1.1px;line-height:1.38px;font-weight:400;color:rgba(0,0,0,0);">—</span>
<div class="r" style="left:65.20px;top:293.15px;width:12.70px;height:12.70px;background:#fff;border:1px solid #d8dade;border-radius:1.5px;"></div>
<div class="r" style="left:97.00px;top:293.80px;width:20.30px;height:12.00px;background:#e3edf9;border-radius:6px;border:.7px solid #cbdcee;"></div>
<div class="r" style="left:106.00px;top:294.30px;width:11.00px;height:11.00px;background:#1a79c4;border-radius:50%;"></div>
<span id="t76" class="t" style="left:135.00px;transform-origin:0 50%;transform:scaleX(0.8763);top:289.97px;font-size:8.36px;line-height:10.45px;font-weight:400;color:#1a73b8;">WeHit Elmira Skirt Wollen Coord Set Advantag...</span>
<span id="t77" class="t" style="left:300.60px;transform-origin:0 50%;transform:scaleX(0.8440);top:289.97px;font-size:8.36px;line-height:10.45px;font-weight:400;color:#3a4750;">t or ...</span>
<span id="t78" class="t" style="right:632.20px;transform-origin:100% 50%;transform:scaleX(0.8800);top:291.55px;font-size:8.36px;line-height:7.3px;font-weight:400;color:#1c2b33;border-bottom:.7px solid #5a666e;">6</span>
<svg class="r" style="left:394.00px;top:292.20px;" width="5.6" height="5.8" viewBox="0 0 5.6 5.8"><path d="M.5.3V5.4M.5.8H5L3.9 2.4 5 4H.5" fill="none" stroke="#2b3940" stroke-width=".9"/></svg>
<span id="t79" class="t" style="right:632.20px;transform-origin:100% 50%;transform:scaleX(0.8960);top:301.83px;font-size:6.82px;line-height:8.53px;font-weight:400;color:#6b7780;">Website purchases</span>
<span id="t80" class="t" style="right:547.00px;transform-origin:100% 50%;transform:scaleX(0.8300);top:289.97px;font-size:8.36px;line-height:10.45px;font-weight:400;color:#1c2b33;">2,699</span>
<span id="t81" class="t" style="right:469.50px;transform-origin:100% 50%;transform:scaleX(0.8556);top:289.97px;font-size:8.36px;line-height:10.45px;font-weight:400;color:#1c2b33;">3,112</span>
<span id="t82" class="t" style="right:399.40px;transform-origin:100% 50%;transform:scaleX(0.8385);top:291.55px;font-size:8.36px;line-height:7.3px;font-weight:400;color:#1c2b33;border-bottom:.7px solid #5a666e;">₹376.14</span>
<svg class="r" style="left:627.00px;top:292.20px;" width="5.6" height="5.8" viewBox="0 0 5.6 5.8"><path d="M.5.3V5.4M.5.8H5L3.9 2.4 5 4H.5" fill="none" stroke="#2b3940" stroke-width=".9"/></svg>
<span id="t83" class="t" style="right:399.40px;transform-origin:100% 50%;transform:scaleX(0.8783);top:301.83px;font-size:6.82px;line-height:8.53px;font-weight:400;color:#6b7780;">Per purchase</span>
<span id="t84" class="t" style="right:314.40px;transform-origin:100% 50%;transform:scaleX(0.8366);top:289.97px;font-size:8.36px;line-height:10.45px;font-weight:400;color:#1c2b33;">₹2,256.84</span>
<span id="t85" class="t" style="right:243.80px;transform-origin:100% 50%;transform:scaleX(0.8295);top:291.55px;font-size:8.36px;line-height:7.3px;font-weight:400;color:#1c2b33;border-bottom:.7px solid #5a666e;">9.14</span>
<svg class="r" style="left:782.40px;top:292.20px;" width="5.6" height="5.8" viewBox="0 0 5.6 5.8"><path d="M.5.3V5.4M.5.8H5L3.9 2.4 5 4H.5" fill="none" stroke="#2b3940" stroke-width=".9"/></svg>
<span id="t86" class="t" style="right:166.50px;transform-origin:100% 50%;transform:scaleX(0.8295);top:291.55px;font-size:8.36px;line-height:7.3px;font-weight:400;color:#1c2b33;border-bottom:.7px solid #5a666e;">9.14</span>
<svg class="r" style="left:859.70px;top:292.20px;" width="5.6" height="5.8" viewBox="0 0 5.6 5.8"><path d="M.5.3V5.4M.5.8H5L3.9 2.4 5 4H.5" fill="none" stroke="#2b3940" stroke-width=".9"/></svg>
<div class="r" style="left:935.00px;top:295.70px;width:7.30px;height:0.70px;background:#616c74;"></div>
<span id="t87" class="t" style="left:938.70px;transform-origin:50% 50%;transform:translateX(-50%) scaleX(0.8800);top:294.51px;font-size:1.1px;line-height:1.38px;font-weight:400;color:rgba(0,0,0,0);">—</span>
<div class="r" style="left:65.20px;top:317.55px;width:12.70px;height:12.70px;background:#fff;border:1px solid #d8dade;border-radius:1.5px;"></div>
<div class="r" style="left:97.00px;top:318.20px;width:20.30px;height:12.00px;background:#e3edf9;border-radius:6px;border:.7px solid #cbdcee;"></div>
<div class="r" style="left:106.00px;top:318.70px;width:11.00px;height:11.00px;background:#1a79c4;border-radius:50%;"></div>
<span id="t88" class="t" style="left:135.00px;transform-origin:0 50%;transform:scaleX(0.8848);top:314.38px;font-size:8.36px;line-height:10.45px;font-weight:400;color:#1a73b8;">WeHit Winter Pullovers &amp; Tops Advantage+ sh...</span>
<span id="t89" class="t" style="left:300.60px;transform-origin:0 50%;transform:scaleX(0.8440);top:314.38px;font-size:8.36px;line-height:10.45px;font-weight:400;color:#3a4750;">t or ...</span>
<span id="t90" class="t" style="right:632.20px;transform-origin:100% 50%;transform:scaleX(0.8800);top:315.95px;font-size:8.36px;line-height:7.3px;font-weight:400;color:#1c2b33;border-bottom:.7px solid #5a666e;">4</span>
<svg class="r" style="left:394.00px;top:316.60px;" width="5.6" height="5.8" viewBox="0 0 5.6 5.8"><path d="M.5.3V5.4M.5.8H5L3.9 2.4 5 4H.5" fill="none" stroke="#2b3940" stroke-width=".9"/></svg>
<span id="t91" class="t" style="right:632.20px;transform-origin:100% 50%;transform:scaleX(0.8960);top:326.24px;font-size:6.82px;line-height:8.53px;font-weight:400;color:#6b7780;">Website purchases</span>
<span id="t92" class="t" style="right:547.00px;transform-origin:100% 50%;transform:scaleX(0.8300);top:314.38px;font-size:8.36px;line-height:10.45px;font-weight:400;color:#1c2b33;">4,351</span>
<span id="t93" class="t" style="right:469.50px;transform-origin:100% 50%;transform:scaleX(0.8300);top:314.38px;font-size:8.36px;line-height:10.45px;font-weight:400;color:#1c2b33;">4,817</span>
<span id="t94" class="t" style="right:399.40px;transform-origin:100% 50%;transform:scaleX(0.8385);top:315.95px;font-size:8.36px;line-height:7.3px;font-weight:400;color:#1c2b33;border-bottom:.7px solid #5a666e;">₹426.10</span>
<svg class="r" style="left:627.00px;top:316.60px;" width="5.6" height="5.8" viewBox="0 0 5.6 5.8"><path d="M.5.3V5.4M.5.8H5L3.9 2.4 5 4H.5" fill="none" stroke="#2b3940" stroke-width=".9"/></svg>
<span id="t95" class="t" style="right:399.40px;transform-origin:100% 50%;transform:scaleX(0.8783);top:326.24px;font-size:6.82px;line-height:8.53px;font-weight:400;color:#6b7780;">Per purchase</span>
<span id="t96" class="t" style="right:314.40px;transform-origin:100% 50%;transform:scaleX(0.8366);top:314.38px;font-size:8.36px;line-height:10.45px;font-weight:400;color:#1c2b33;">₹1,704.40</span>
<span id="t97" class="t" style="right:243.80px;transform-origin:100% 50%;transform:scaleX(0.8295);top:315.95px;font-size:8.36px;line-height:7.3px;font-weight:400;color:#1c2b33;border-bottom:.7px solid #5a666e;">6.53</span>
<svg class="r" style="left:782.40px;top:316.60px;" width="5.6" height="5.8" viewBox="0 0 5.6 5.8"><path d="M.5.3V5.4M.5.8H5L3.9 2.4 5 4H.5" fill="none" stroke="#2b3940" stroke-width=".9"/></svg>
<span id="t98" class="t" style="right:166.50px;transform-origin:100% 50%;transform:scaleX(0.8295);top:315.95px;font-size:8.36px;line-height:7.3px;font-weight:400;color:#1c2b33;border-bottom:.7px solid #5a666e;">6.53</span>
<svg class="r" style="left:859.70px;top:316.60px;" width="5.6" height="5.8" viewBox="0 0 5.6 5.8"><path d="M.5.3V5.4M.5.8H5L3.9 2.4 5 4H.5" fill="none" stroke="#2b3940" stroke-width=".9"/></svg>
<div class="r" style="left:935.00px;top:320.10px;width:7.30px;height:0.70px;background:#616c74;"></div>
<span id="t99" class="t" style="left:938.70px;transform-origin:50% 50%;transform:translateX(-50%) scaleX(0.8800);top:318.91px;font-size:1.1px;line-height:1.38px;font-weight:400;color:rgba(0,0,0,0);">—</span>
<div class="r" style="left:65.20px;top:341.95px;width:12.70px;height:12.70px;background:#fff;border:1px solid #d8dade;border-radius:1.5px;"></div>
<div class="r" style="left:97.00px;top:342.60px;width:20.30px;height:12.00px;background:#e3edf9;border-radius:6px;border:.7px solid #cbdcee;"></div>
<div class="r" style="left:106.00px;top:343.10px;width:11.00px;height:11.00px;background:#1a79c4;border-radius:50%;"></div>
<span id="t100" class="t" style="left:135.00px;transform-origin:0 50%;transform:scaleX(0.8696);top:338.77px;font-size:8.36px;line-height:10.45px;font-weight:400;color:#1a73b8;">WeHit Dua Pearl Wollen Coord Set Advantage...</span>
<span id="t101" class="t" style="left:300.60px;transform-origin:0 50%;transform:scaleX(0.8440);top:338.77px;font-size:8.36px;line-height:10.45px;font-weight:400;color:#3a4750;">t or ...</span>
<span id="t102" class="t" style="right:632.20px;transform-origin:100% 50%;transform:scaleX(0.8800);top:340.35px;font-size:8.36px;line-height:7.3px;font-weight:400;color:#1c2b33;border-bottom:.7px solid #5a666e;">6</span>
<svg class="r" style="left:394.00px;top:341.00px;" width="5.6" height="5.8" viewBox="0 0 5.6 5.8"><path d="M.5.3V5.4M.5.8H5L3.9 2.4 5 4H.5" fill="none" stroke="#2b3940" stroke-width=".9"/></svg>
<span id="t103" class="t" style="right:632.20px;transform-origin:100% 50%;transform:scaleX(0.8960);top:350.63px;font-size:6.82px;line-height:8.53px;font-weight:400;color:#6b7780;">Website purchases</span>
<span id="t104" class="t" style="right:547.00px;transform-origin:100% 50%;transform:scaleX(0.8300);top:338.77px;font-size:8.36px;line-height:10.45px;font-weight:400;color:#1c2b33;">1,884</span>
<span id="t105" class="t" style="right:469.50px;transform-origin:100% 50%;transform:scaleX(0.8300);top:338.77px;font-size:8.36px;line-height:10.45px;font-weight:400;color:#1c2b33;">2,157</span>
<span id="t106" class="t" style="right:399.40px;transform-origin:100% 50%;transform:scaleX(0.8385);top:340.35px;font-size:8.36px;line-height:7.3px;font-weight:400;color:#1c2b33;border-bottom:.7px solid #5a666e;">₹289.13</span>
<svg class="r" style="left:627.00px;top:341.00px;" width="5.6" height="5.8" viewBox="0 0 5.6 5.8"><path d="M.5.3V5.4M.5.8H5L3.9 2.4 5 4H.5" fill="none" stroke="#2b3940" stroke-width=".9"/></svg>
<span id="t107" class="t" style="right:399.40px;transform-origin:100% 50%;transform:scaleX(0.8783);top:350.63px;font-size:6.82px;line-height:8.53px;font-weight:400;color:#6b7780;">Per purchase</span>
<span id="t108" class="t" style="right:314.40px;transform-origin:100% 50%;transform:scaleX(0.8366);top:338.77px;font-size:8.36px;line-height:10.45px;font-weight:400;color:#1c2b33;">₹1,734.75</span>
<span id="t109" class="t" style="right:243.80px;transform-origin:100% 50%;transform:scaleX(0.8556);top:340.35px;font-size:8.36px;line-height:7.3px;font-weight:400;color:#1c2b33;border-bottom:.7px solid #5a666e;">11.21</span>
<svg class="r" style="left:782.40px;top:341.00px;" width="5.6" height="5.8" viewBox="0 0 5.6 5.8"><path d="M.5.3V5.4M.5.8H5L3.9 2.4 5 4H.5" fill="none" stroke="#2b3940" stroke-width=".9"/></svg>
<span id="t110" class="t" style="right:166.50px;transform-origin:100% 50%;transform:scaleX(0.8556);top:340.35px;font-size:8.36px;line-height:7.3px;font-weight:400;color:#1c2b33;border-bottom:.7px solid #5a666e;">11.21</span>
<svg class="r" style="left:859.70px;top:341.00px;" width="5.6" height="5.8" viewBox="0 0 5.6 5.8"><path d="M.5.3V5.4M.5.8H5L3.9 2.4 5 4H.5" fill="none" stroke="#2b3940" stroke-width=".9"/></svg>
<div class="r" style="left:935.00px;top:344.50px;width:7.30px;height:0.70px;background:#616c74;"></div>
<span id="t111" class="t" style="left:938.70px;transform-origin:50% 50%;transform:translateX(-50%) scaleX(0.8800);top:343.31px;font-size:1.1px;line-height:1.38px;font-weight:400;color:rgba(0,0,0,0);">—</span>
<div class="r" style="left:65.20px;top:366.35px;width:12.70px;height:12.70px;background:#fff;border:1px solid #d8dade;border-radius:1.5px;"></div>
<div class="r" style="left:97.00px;top:367.00px;width:20.30px;height:12.00px;background:#e3edf9;border-radius:6px;border:.7px solid #cbdcee;"></div>
<div class="r" style="left:106.00px;top:367.50px;width:11.00px;height:11.00px;background:#1a79c4;border-radius:50%;"></div>
<span id="t112" class="t" style="left:135.00px;transform-origin:0 50%;transform:scaleX(0.8684);top:363.17px;font-size:8.36px;line-height:10.45px;font-weight:400;color:#1a73b8;">WeHit Riana Wollen Track Suit Advantage+ sh...</span>
<span id="t113" class="t" style="left:300.60px;transform-origin:0 50%;transform:scaleX(0.8440);top:363.17px;font-size:8.36px;line-height:10.45px;font-weight:400;color:#3a4750;">t or ...</span>
<span id="t114" class="t" style="right:632.20px;transform-origin:100% 50%;transform:scaleX(0.8800);top:364.75px;font-size:8.36px;line-height:7.3px;font-weight:400;color:#1c2b33;border-bottom:.7px solid #5a666e;">6</span>
<svg class="r" style="left:394.00px;top:365.40px;" width="5.6" height="5.8" viewBox="0 0 5.6 5.8"><path d="M.5.3V5.4M.5.8H5L3.9 2.4 5 4H.5" fill="none" stroke="#2b3940" stroke-width=".9"/></svg>
<span id="t115" class="t" style="right:632.20px;transform-origin:100% 50%;transform:scaleX(0.8960);top:375.03px;font-size:6.82px;line-height:8.53px;font-weight:400;color:#6b7780;">Website purchases</span>
<span id="t116" class="t" style="right:547.00px;transform-origin:100% 50%;transform:scaleX(0.8300);top:363.17px;font-size:8.36px;line-height:10.45px;font-weight:400;color:#1c2b33;">4,944</span>
<span id="t117" class="t" style="right:469.50px;transform-origin:100% 50%;transform:scaleX(0.8300);top:363.17px;font-size:8.36px;line-height:10.45px;font-weight:400;color:#1c2b33;">5,613</span>
<span id="t118" class="t" style="right:399.40px;transform-origin:100% 50%;transform:scaleX(0.8385);top:364.75px;font-size:8.36px;line-height:7.3px;font-weight:400;color:#1c2b33;border-bottom:.7px solid #5a666e;">₹371.34</span>
<svg class="r" style="left:627.00px;top:365.40px;" width="5.6" height="5.8" viewBox="0 0 5.6 5.8"><path d="M.5.3V5.4M.5.8H5L3.9 2.4 5 4H.5" fill="none" stroke="#2b3940" stroke-width=".9"/></svg>
<span id="t119" class="t" style="right:399.40px;transform-origin:100% 50%;transform:scaleX(0.8783);top:375.03px;font-size:6.82px;line-height:8.53px;font-weight:400;color:#6b7780;">Per purchase</span>
<span id="t120" class="t" style="right:314.40px;transform-origin:100% 50%;transform:scaleX(0.8366);top:363.17px;font-size:8.36px;line-height:10.45px;font-weight:400;color:#1c2b33;">₹2,228.06</span>
<span id="t121" class="t" style="right:243.80px;transform-origin:100% 50%;transform:scaleX(0.8295);top:364.75px;font-size:8.36px;line-height:7.3px;font-weight:400;color:#1c2b33;border-bottom:.7px solid #5a666e;">9.40</span>
<svg class="r" style="left:782.40px;top:365.40px;" width="5.6" height="5.8" viewBox="0 0 5.6 5.8"><path d="M.5.3V5.4M.5.8H5L3.9 2.4 5 4H.5" fill="none" stroke="#2b3940" stroke-width=".9"/></svg>
<span id="t122" class="t" style="right:166.50px;transform-origin:100% 50%;transform:scaleX(0.8295);top:364.75px;font-size:8.36px;line-height:7.3px;font-weight:400;color:#1c2b33;border-bottom:.7px solid #5a666e;">9.40</span>
<svg class="r" style="left:859.70px;top:365.40px;" width="5.6" height="5.8" viewBox="0 0 5.6 5.8"><path d="M.5.3V5.4M.5.8H5L3.9 2.4 5 4H.5" fill="none" stroke="#2b3940" stroke-width=".9"/></svg>
<div class="r" style="left:935.00px;top:368.90px;width:7.30px;height:0.70px;background:#616c74;"></div>
<span id="t123" class="t" style="left:938.70px;transform-origin:50% 50%;transform:translateX(-50%) scaleX(0.8800);top:367.71px;font-size:1.1px;line-height:1.38px;font-weight:400;color:rgba(0,0,0,0);">—</span>
<div class="r" style="left:65.20px;top:390.75px;width:12.70px;height:12.70px;background:#fff;border:1px solid #d8dade;border-radius:1.5px;"></div>
<div class="r" style="left:97.00px;top:391.40px;width:20.30px;height:12.00px;background:#e3edf9;border-radius:6px;border:.7px solid #cbdcee;"></div>
<div class="r" style="left:106.00px;top:391.90px;width:11.00px;height:11.00px;background:#1a79c4;border-radius:50%;"></div>
<span id="t124" class="t" style="left:135.00px;transform-origin:0 50%;transform:scaleX(0.8846);top:387.57px;font-size:8.36px;line-height:10.45px;font-weight:400;color:#1a73b8;">Ania Wollen Coord Set Advantage+ shopping ...</span>
<span id="t125" class="t" style="left:300.60px;transform-origin:0 50%;transform:scaleX(0.8440);top:387.57px;font-size:8.36px;line-height:10.45px;font-weight:400;color:#3a4750;">t or ...</span>
<span id="t126" class="t" style="right:632.20px;transform-origin:100% 50%;transform:scaleX(0.8800);top:389.15px;font-size:8.36px;line-height:7.3px;font-weight:400;color:#1c2b33;border-bottom:.7px solid #5a666e;">3</span>
<svg class="r" style="left:394.00px;top:389.80px;" width="5.6" height="5.8" viewBox="0 0 5.6 5.8"><path d="M.5.3V5.4M.5.8H5L3.9 2.4 5 4H.5" fill="none" stroke="#2b3940" stroke-width=".9"/></svg>
<span id="t127" class="t" style="right:632.20px;transform-origin:100% 50%;transform:scaleX(0.8960);top:399.43px;font-size:6.82px;line-height:8.53px;font-weight:400;color:#6b7780;">Website purchases</span>
<span id="t128" class="t" style="right:547.00px;transform-origin:100% 50%;transform:scaleX(0.8300);top:387.57px;font-size:8.36px;line-height:10.45px;font-weight:400;color:#1c2b33;">1,877</span>
<span id="t129" class="t" style="right:469.50px;transform-origin:100% 50%;transform:scaleX(0.8300);top:387.57px;font-size:8.36px;line-height:10.45px;font-weight:400;color:#1c2b33;">2,191</span>
<span id="t130" class="t" style="right:399.40px;transform-origin:100% 50%;transform:scaleX(0.8385);top:389.15px;font-size:8.36px;line-height:7.3px;font-weight:400;color:#1c2b33;border-bottom:.7px solid #5a666e;">₹735.01</span>
<svg class="r" style="left:627.00px;top:389.80px;" width="5.6" height="5.8" viewBox="0 0 5.6 5.8"><path d="M.5.3V5.4M.5.8H5L3.9 2.4 5 4H.5" fill="none" stroke="#2b3940" stroke-width=".9"/></svg>
<span id="t131" class="t" style="right:399.40px;transform-origin:100% 50%;transform:scaleX(0.8783);top:399.43px;font-size:6.82px;line-height:8.53px;font-weight:400;color:#6b7780;">Per purchase</span>
<span id="t132" class="t" style="right:314.40px;transform-origin:100% 50%;transform:scaleX(0.8366);top:387.57px;font-size:8.36px;line-height:10.45px;font-weight:400;color:#1c2b33;">₹2,205.03</span>
<span id="t133" class="t" style="right:243.80px;transform-origin:100% 50%;transform:scaleX(0.8295);top:389.15px;font-size:8.36px;line-height:7.3px;font-weight:400;color:#1c2b33;border-bottom:.7px solid #5a666e;">8.35</span>
<svg class="r" style="left:782.40px;top:389.80px;" width="5.6" height="5.8" viewBox="0 0 5.6 5.8"><path d="M.5.3V5.4M.5.8H5L3.9 2.4 5 4H.5" fill="none" stroke="#2b3940" stroke-width=".9"/></svg>
<span id="t134" class="t" style="right:166.50px;transform-origin:100% 50%;transform:scaleX(0.8295);top:389.15px;font-size:8.36px;line-height:7.3px;font-weight:400;color:#1c2b33;border-bottom:.7px solid #5a666e;">8.35</span>
<svg class="r" style="left:859.70px;top:389.80px;" width="5.6" height="5.8" viewBox="0 0 5.6 5.8"><path d="M.5.3V5.4M.5.8H5L3.9 2.4 5 4H.5" fill="none" stroke="#2b3940" stroke-width=".9"/></svg>
<div class="r" style="left:935.00px;top:393.30px;width:7.30px;height:0.70px;background:#616c74;"></div>
<span id="t135" class="t" style="left:938.70px;transform-origin:50% 50%;transform:translateX(-50%) scaleX(0.8800);top:392.11px;font-size:1.1px;line-height:1.38px;font-weight:400;color:rgba(0,0,0,0);">—</span>
<div class="r" style="left:65.20px;top:415.15px;width:12.70px;height:12.70px;background:#fff;border:1px solid #d8dade;border-radius:1.5px;"></div>
<div class="r" style="left:97.00px;top:415.80px;width:20.30px;height:12.00px;background:#e3edf9;border-radius:6px;border:.7px solid #cbdcee;"></div>
<div class="r" style="left:106.00px;top:416.30px;width:11.00px;height:11.00px;background:#1a79c4;border-radius:50%;"></div>
<span id="t136" class="t" style="left:135.00px;transform-origin:0 50%;transform:scaleX(0.8831);top:411.97px;font-size:8.36px;line-height:10.45px;font-weight:400;color:#1a73b8;">WeHit Kita Coord Set Advantage+ shopping ca...</span>
<span id="t137" class="t" style="left:300.60px;transform-origin:0 50%;transform:scaleX(0.8440);top:411.97px;font-size:8.36px;line-height:10.45px;font-weight:400;color:#3a4750;">t or ...</span>
<span id="t138" class="t" style="right:632.20px;transform-origin:100% 50%;transform:scaleX(0.8800);top:413.55px;font-size:8.36px;line-height:7.3px;font-weight:400;color:#1c2b33;border-bottom:.7px solid #5a666e;">7</span>
<svg class="r" style="left:394.00px;top:414.20px;" width="5.6" height="5.8" viewBox="0 0 5.6 5.8"><path d="M.5.3V5.4M.5.8H5L3.9 2.4 5 4H.5" fill="none" stroke="#2b3940" stroke-width=".9"/></svg>
<span id="t139" class="t" style="right:632.20px;transform-origin:100% 50%;transform:scaleX(0.8960);top:423.83px;font-size:6.82px;line-height:8.53px;font-weight:400;color:#6b7780;">Website purchases</span>
<span id="t140" class="t" style="right:547.00px;transform-origin:100% 50%;transform:scaleX(0.8300);top:411.97px;font-size:8.36px;line-height:10.45px;font-weight:400;color:#1c2b33;">7,646</span>
<span id="t141" class="t" style="right:469.50px;transform-origin:100% 50%;transform:scaleX(0.8300);top:411.97px;font-size:8.36px;line-height:10.45px;font-weight:400;color:#1c2b33;">8,347</span>
<span id="t142" class="t" style="right:399.40px;transform-origin:100% 50%;transform:scaleX(0.8385);top:413.55px;font-size:8.36px;line-height:7.3px;font-weight:400;color:#1c2b33;border-bottom:.7px solid #5a666e;">₹618.21</span>
<svg class="r" style="left:627.00px;top:414.20px;" width="5.6" height="5.8" viewBox="0 0 5.6 5.8"><path d="M.5.3V5.4M.5.8H5L3.9 2.4 5 4H.5" fill="none" stroke="#2b3940" stroke-width=".9"/></svg>
<span id="t143" class="t" style="right:399.40px;transform-origin:100% 50%;transform:scaleX(0.8783);top:423.83px;font-size:6.82px;line-height:8.53px;font-weight:400;color:#6b7780;">Per purchase</span>
<span id="t144" class="t" style="right:314.40px;transform-origin:100% 50%;transform:scaleX(0.8366);top:411.97px;font-size:8.36px;line-height:10.45px;font-weight:400;color:#1c2b33;">₹4,327.44</span>
<span id="t145" class="t" style="right:243.80px;transform-origin:100% 50%;transform:scaleX(0.8295);top:413.55px;font-size:8.36px;line-height:7.3px;font-weight:400;color:#1c2b33;border-bottom:.7px solid #5a666e;">5.19</span>
<svg class="r" style="left:782.40px;top:414.20px;" width="5.6" height="5.8" viewBox="0 0 5.6 5.8"><path d="M.5.3V5.4M.5.8H5L3.9 2.4 5 4H.5" fill="none" stroke="#2b3940" stroke-width=".9"/></svg>
<span id="t146" class="t" style="right:166.50px;transform-origin:100% 50%;transform:scaleX(0.8295);top:413.55px;font-size:8.36px;line-height:7.3px;font-weight:400;color:#1c2b33;border-bottom:.7px solid #5a666e;">5.19</span>
<svg class="r" style="left:859.70px;top:414.20px;" width="5.6" height="5.8" viewBox="0 0 5.6 5.8"><path d="M.5.3V5.4M.5.8H5L3.9 2.4 5 4H.5" fill="none" stroke="#2b3940" stroke-width=".9"/></svg>
<div class="r" style="left:935.00px;top:417.70px;width:7.30px;height:0.70px;background:#616c74;"></div>
<span id="t147" class="t" style="left:938.70px;transform-origin:50% 50%;transform:translateX(-50%) scaleX(0.8800);top:416.51px;font-size:1.1px;line-height:1.38px;font-weight:400;color:rgba(0,0,0,0);">—</span>
<div class="r" style="left:65.20px;top:439.55px;width:12.70px;height:12.70px;background:#fff;border:1px solid #d8dade;border-radius:1.5px;"></div>
<div class="r" style="left:97.00px;top:440.20px;width:20.30px;height:12.00px;background:#e3edf9;border-radius:6px;border:.7px solid #cbdcee;"></div>
<div class="r" style="left:106.00px;top:440.70px;width:11.00px;height:11.00px;background:#1a79c4;border-radius:50%;"></div>
<span id="t148" class="t" style="left:135.00px;transform-origin:0 50%;transform:scaleX(0.8194);top:436.38px;font-size:8.36px;line-height:10.45px;font-weight:400;color:#1a73b8;">Tar</span>
<span id="t149" class="t" style="left:300.60px;transform-origin:0 50%;transform:scaleX(0.8940);top:436.38px;font-size:8.36px;line-height:10.45px;font-weight:400;color:#3a4750;">, 1-...</span>
<span id="t150" class="t" style="right:632.20px;transform-origin:100% 50%;transform:scaleX(0.8800);top:437.95px;font-size:8.36px;line-height:7.3px;font-weight:400;color:#1c2b33;border-bottom:.7px solid #5a666e;">2</span>
<svg class="r" style="left:394.00px;top:438.60px;" width="5.6" height="5.8" viewBox="0 0 5.6 5.8"><path d="M.5.3V5.4M.5.8H5L3.9 2.4 5 4H.5" fill="none" stroke="#2b3940" stroke-width=".9"/></svg>
<span id="t151" class="t" style="right:632.20px;transform-origin:100% 50%;transform:scaleX(0.8960);top:448.24px;font-size:6.82px;line-height:8.53px;font-weight:400;color:#6b7780;">Website purchases</span>
<span id="t152" class="t" style="right:547.00px;transform-origin:100% 50%;transform:scaleX(0.8300);top:436.38px;font-size:8.36px;line-height:10.45px;font-weight:400;color:#1c2b33;">2,086</span>
<span id="t153" class="t" style="right:469.50px;transform-origin:100% 50%;transform:scaleX(0.8300);top:436.38px;font-size:8.36px;line-height:10.45px;font-weight:400;color:#1c2b33;">2,376</span>
<span id="t154" class="t" style="right:399.40px;transform-origin:100% 50%;transform:scaleX(0.8385);top:437.95px;font-size:8.36px;line-height:7.3px;font-weight:400;color:#1c2b33;border-bottom:.7px solid #5a666e;">₹601.72</span>
<svg class="r" style="left:627.00px;top:438.60px;" width="5.6" height="5.8" viewBox="0 0 5.6 5.8"><path d="M.5.3V5.4M.5.8H5L3.9 2.4 5 4H.5" fill="none" stroke="#2b3940" stroke-width=".9"/></svg>
<span id="t155" class="t" style="right:399.40px;transform-origin:100% 50%;transform:scaleX(0.8783);top:448.24px;font-size:6.82px;line-height:8.53px;font-weight:400;color:#6b7780;">Per purchase</span>
<span id="t156" class="t" style="right:314.40px;transform-origin:100% 50%;transform:scaleX(0.8366);top:436.38px;font-size:8.36px;line-height:10.45px;font-weight:400;color:#1c2b33;">₹1,203.44</span>
<span id="t157" class="t" style="right:243.80px;transform-origin:100% 50%;transform:scaleX(0.8295);top:437.95px;font-size:8.36px;line-height:7.3px;font-weight:400;color:#1c2b33;border-bottom:.7px solid #5a666e;">5.43</span>
<svg class="r" style="left:782.40px;top:438.60px;" width="5.6" height="5.8" viewBox="0 0 5.6 5.8"><path d="M.5.3V5.4M.5.8H5L3.9 2.4 5 4H.5" fill="none" stroke="#2b3940" stroke-width=".9"/></svg>
<span id="t158" class="t" style="right:166.50px;transform-origin:100% 50%;transform:scaleX(0.8295);top:437.95px;font-size:8.36px;line-height:7.3px;font-weight:400;color:#1c2b33;border-bottom:.7px solid #5a666e;">5.43</span>
<svg class="r" style="left:859.70px;top:438.60px;" width="5.6" height="5.8" viewBox="0 0 5.6 5.8"><path d="M.5.3V5.4M.5.8H5L3.9 2.4 5 4H.5" fill="none" stroke="#2b3940" stroke-width=".9"/></svg>
<div class="r" style="left:935.00px;top:442.10px;width:7.30px;height:0.70px;background:#616c74;"></div>
<span id="t159" class="t" style="left:938.70px;transform-origin:50% 50%;transform:translateX(-50%) scaleX(0.8800);top:440.91px;font-size:1.1px;line-height:1.38px;font-weight:400;color:rgba(0,0,0,0);">—</span>
<svg class="r" style="left:211.40px;top:243.10px;" width="5.8" height="5.8" viewBox="0 0 8 8"><path d="M.3 7.7L.8 5.6 5.4 1 7 2.6 2.4 7.2Z M5.9.5L6.4 0 8 1.6 7.5 2.1Z" fill="#4b5861"/></svg>
<svg class="r" style="left:135.50px;top:254.80px;" width="6.2" height="6.9" viewBox="0 0 5.4 6"><path d="M.3 5.7H5.1" stroke="#1c2b33" stroke-width=".6"/><path d="M.6 3.4H1.8V5.2H.6ZM2.2 .4H3.4V5.2H2.2ZM3.8 2.2H5V5.2H3.8Z" fill="#1c2b33"/></svg>
<span id="t160" class="t" style="left:143.80px;transform-origin:0 50%;transform:scaleX(0.8655);top:254.07px;font-size:6.93px;line-height:8.66px;font-weight:400;color:#1c2b33;">View Charts</span>
<svg class="r" style="left:183.30px;top:255.10px;" width="6.4" height="6.4" viewBox="0 0 8 8"><path d="M.3 7.7L.8 5.6 5.4 1 7 2.6 2.4 7.2Z M5.9.5L6.4 0 8 1.6 7.5 2.1Z" fill="#1c2b33"/></svg>
<span id="t161" class="t" style="left:191.70px;transform-origin:0 50%;transform:scaleX(0.8628);top:254.07px;font-size:6.93px;line-height:8.66px;font-weight:400;color:#1c2b33;">Edit</span>
<svg class="r" style="left:208.20px;top:255.00px;" width="6.8" height="6.8" viewBox="0 0 6 6"><path d="M.5 1V5.6" stroke="#1c2b33" stroke-width=".8"/><path d="M1.8.2H4L5.6 1.8V5.8H1.8Z" fill="#1c2b33"/></svg>
<span id="t162" class="t" style="left:217.00px;transform-origin:0 50%;transform:scaleX(0.9079);top:254.07px;font-size:6.93px;line-height:8.66px;font-weight:400;color:#1c2b33;">Duplicate</span>
<svg class="r" style="left:250.30px;top:255.00px;" width="6.8" height="6.8" viewBox="0 0 6 6"><path d="M3.2.2L5.8 2.8 5 3 3.9 4.1 3.7 5.6 2.4 4.3.5 6 .2 5.8 1.7 3.6.4 2.3 1.9 2.1 3 1Z" fill="#1c2b33"/></svg>
<span id="t163" class="t" style="left:258.80px;transform-origin:0 50%;transform:scaleX(0.8087);top:254.07px;font-size:6.93px;line-height:8.66px;font-weight:400;color:#1c2b33;">Pin</span>
<div class="r" style="left:959.30px;top:216.60px;width:3.20px;height:222.90px;background:#c1c4c8;border-radius:1.5px;"></div>
<span id="t164" class="t" style="left:137.00px;transform-origin:0 50%;transform:scaleX(0.8659);top:465.90px;font-size:8.47px;line-height:10.59px;font-weight:400;color:#1c2b33;">Results from 11 ad sets</span>
<svg class="r" style="left:215.00px;top:468.00px;" width="6.4" height="6.4" viewBox="0 0 6.4 6.4"><circle cx="3.2" cy="3.2" r="3.1" fill="#1c2b33"/><path d="M3.2 2.8V5" stroke="#fff" stroke-width=".9"/><circle cx="3.2" cy="1.7" r=".55" fill="#fff"/></svg>
<span id="t165" class="t" style="left:301.50px;transform-origin:0 50%;transform:scaleX(0.8862);top:465.97px;font-size:8.36px;line-height:10.45px;font-weight:400;color:#1c2b33;">ttrib...</span>
<span id="t166" class="t" style="right:624.00px;transform-origin:100% 50%;transform:scaleX(0.8620);top:467.55px;font-size:8.36px;line-height:7.3px;font-weight:400;color:#1c2b33;border-bottom:.7px solid #5a666e;">60</span>
<span id="t167" class="t" style="right:624.00px;transform-origin:100% 50%;transform:scaleX(0.8908);top:477.94px;font-size:6.82px;line-height:8.53px;font-weight:400;color:#6b7780;">Website purchases</span>
<span id="t168" class="t" style="right:546.50px;transform-origin:100% 50%;transform:scaleX(0.8225);top:467.55px;font-size:8.36px;line-height:7.3px;font-weight:400;color:#1c2b33;border-bottom:.7px solid #5a666e;">37,270</span>
<span id="t169" class="t" style="left:410.00px;transform-origin:0 50%;transform:scaleX(0.8849);top:477.94px;font-size:6.82px;line-height:8.53px;font-weight:400;color:#6b7780;">Accounts Centre acco...</span>
<span id="t170" class="t" style="right:468.00px;transform-origin:100% 50%;transform:scaleX(0.8029);top:465.97px;font-size:8.36px;line-height:10.45px;font-weight:400;color:#1c2b33;">47,003</span>
<span id="t171" class="t" style="right:468.00px;transform-origin:100% 50%;transform:scaleX(0.9034);top:477.94px;font-size:6.82px;line-height:8.53px;font-weight:400;color:#6b7780;">Total</span>
<span id="t172" class="t" style="right:390.50px;transform-origin:100% 50%;transform:scaleX(0.8680);top:465.97px;font-size:8.36px;line-height:10.45px;font-weight:400;color:#1c2b33;">₹424.52</span>
<span id="t173" class="t" style="right:390.50px;transform-origin:100% 50%;transform:scaleX(0.9005);top:477.94px;font-size:6.82px;line-height:8.53px;font-weight:400;color:#6b7780;">Per purchase</span>
<span id="t174" class="t" style="right:313.50px;transform-origin:100% 50%;transform:scaleX(0.8309);top:465.97px;font-size:8.36px;line-height:10.45px;font-weight:400;color:#1c2b33;">₹25,471.15</span>
<span id="t175" class="t" style="right:313.50px;transform-origin:100% 50%;transform:scaleX(0.9093);top:477.94px;font-size:6.82px;line-height:8.53px;font-weight:400;color:#6b7780;">Total Spent</span>
<span id="t176" class="t" style="right:235.50px;transform-origin:100% 50%;transform:scaleX(0.8000);top:465.97px;font-size:8.36px;line-height:10.45px;font-weight:400;color:#1c2b33;">8.33</span>
<span id="t177" class="t" style="right:235.50px;transform-origin:100% 50%;transform:scaleX(0.9103);top:477.94px;font-size:6.82px;line-height:8.53px;font-weight:400;color:#6b7780;">Average</span>
<span id="t178" class="t" style="right:158.00px;transform-origin:100% 50%;transform:scaleX(0.7692);top:465.97px;font-size:8.36px;line-height:10.45px;font-weight:400;color:#1c2b33;">8.33</span>
<span id="t179" class="t" style="right:158.00px;transform-origin:100% 50%;transform:scaleX(0.9103);top:477.94px;font-size:6.82px;line-height:8.53px;font-weight:400;color:#6b7780;">Average</span>
<div class="r" style="left:934.50px;top:471.70px;width:7.50px;height:0.70px;background:#616c74;"></div>
<span id="t180" class="t" style="right:81.00px;transform-origin:100% 50%;transform:scaleX(0.8905);top:477.94px;font-size:6.82px;line-height:8.53px;font-weight:400;color:#6b7780;">Average</span>
</div></div></div>
</body></html>
